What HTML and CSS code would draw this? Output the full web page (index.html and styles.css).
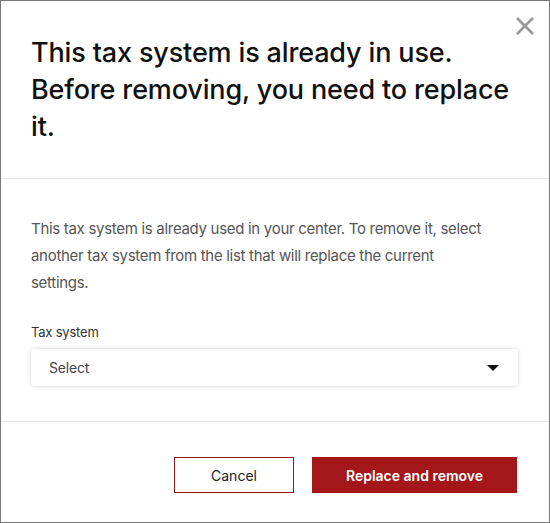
FILE: index.html
```html
<!DOCTYPE html>
<html lang="en">
<head>
    <meta charset="UTF-8">
    <meta name="viewport" content="width=device-width, initial-scale=1.0">
    <title>Remove tax system</title>
    <link rel="stylesheet" href="styles.css">
</head>
<body>
    <div class="modal">
        <div class="modal-header">
            <h2 class="modal-title">This tax system is already in use. Before removing, you need to replace it.</h2>
            <button class="close" aria-label="Close">
                <svg width="20" height="20" viewBox="0 0 20 20">
                    <path d="M2 2 L18 18 M18 2 L2 18" stroke="#999" stroke-width="2.6" fill="none"/>
                </svg>
            </button>
        </div>

        <div class="modal-body">
            <p class="text">This tax system is already used in your center. To remove it, select another tax system from the list that will replace the current settings.</p>
            <label class="label">Tax system</label>
            <div class="select">
                <span>Select</span>
                <span class="caret"></span>
            </div>
        </div>

        <div class="modal-footer">
            <button class="btn btn-cancel">Cancel</button>
            <button class="btn btn-primary">Replace and remove</button>
        </div>
    </div>
</body>
</html>
```

FILE: styles.css
```css
* {
    box-sizing: border-box;
}

body {
    margin: 0;
    background: #ffffff;
    font-family: Inter, "Noto Sans", sans-serif;
}

.modal {
    width: 550px;
    height: 523px;
    border: 1px solid #777777;
    background: #ffffff;
    display: flex;
    flex-direction: column;
}

.modal-header {
    position: relative;
    padding: 33px 30px 33px 30px;
    border-bottom: 1px solid #e8e8e8;
}

.modal-title {
    margin: 0;
    font-size: 27px;
    line-height: 37px;
    font-weight: 500;
    color: #111111;
    letter-spacing: -0.15px;
}

.close {
    position: absolute;
    top: 15px;
    right: 13px;
    width: 22px;
    height: 22px;
    padding: 0;
    border: none;
    background: none;
    cursor: pointer;
}

.modal-body {
    padding: 36px 31px 35px 30px;
    border-bottom: 1px solid #e8e8e8;
}

.text {
    margin: 0 0 27px 0;
    padding-right: 27px;
    font-size: 15px;
    line-height: 27px;
    color: #555555;
    letter-spacing: -0.3px;
}

.label {
    display: block;
    font-size: 13px;
    line-height: 18px;
    color: #333333;
    letter-spacing: -0.2px;
    margin-bottom: 8px;
}

.select {
    height: 37px;
    border-radius: 3px;
    box-shadow: 0 0 4px rgba(0,0,0,0.2);
    display: flex;
    align-items: center;
    justify-content: space-between;
    padding: 0 19px 0 18px;
    font-size: 14px;
    color: #444444;
    letter-spacing: -0.2px;
}

.caret {
    width: 0;
    height: 0;
    border-left: 6px solid transparent;
    border-right: 6px solid transparent;
    border-top: 6px solid #111111;
}

.modal-footer {
    display: flex;
    justify-content: flex-end;
    gap: 18px;
    padding: 35px 32px 0 0;
}

.btn {
    height: 36px;
    font-family: Inter, "Noto Sans", sans-serif;
    font-size: 14px;
    cursor: pointer;
}

.btn-cancel {
    width: 120px;
    background: #ffffff;
    border: 1px solid #8e1a1c;
    color: #222222;
}

.btn-primary {
    width: 205px;
    background: #a3161a;
    border: 1px solid #a3161a;
    color: #ffffff;
    font-weight: 600;
}
```
